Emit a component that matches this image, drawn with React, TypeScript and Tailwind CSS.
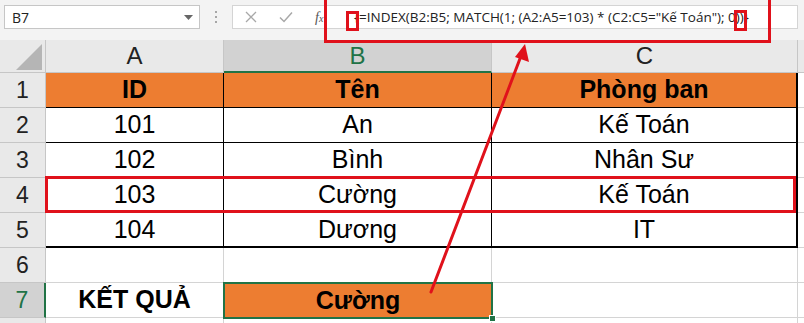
import React from 'react';

const FONT = { fontFamily: '"Liberation Sans", Arial, sans-serif' };

type CellProps = {
    w: string;
    children?: React.ReactNode;
    className?: string;
};

// one spreadsheet cell, width and borders come from className
const Cell: React.FC<CellProps> = ({ w, children, className = '' }) => (
    <div className={`${w} shrink-0 h-full flex items-center justify-center text-[25px] text-black ${className}`}>
        {children}
    </div>
);

const RowHead: React.FC<{ n?: number; active?: boolean }> = ({ n, active }) => (
    <div
        className={
            active
                ? 'w-[46px] shrink-0 h-full flex items-center justify-center text-[23px] text-[#217346] bg-[#d2d2d2] border-b border-b-[#c6c6c6] border-r-2 border-r-[#217346]'
                : 'w-[46px] shrink-0 h-full flex items-center justify-center text-[23px] text-[#222] bg-[#e9e9e9] border-b border-b-[#c6c6c6] border-r border-r-[#c6c6c6]'
        }
    >
        {n}
    </div>
);

const data = [
    ['101', 'An', 'Kế Toán'],
    ['102', 'Bình', 'Nhân Sư'],
    ['103', 'Cường', 'Kế Toán'],
    ['104', 'Dương', 'IT'],
];

const FormulaBar = () => (
    <div className="h-[40px] bg-[#f3f3f3] relative flex items-start pt-[5px] pl-[4px]">
        {/* name box */}
        <div className="w-[196px] h-[24px] bg-white border border-[#c6c6c6] flex items-center justify-between pl-[7px] pr-[6px] text-[14px] text-[#222]" style={{ fontFamily: '"Open Sans", sans-serif' }}>
            <span>B7</span>
            <svg width="9" height="5" viewBox="0 0 9 5"><path d="M0 0h9L4.5 5z" fill="#666" /></svg>
        </div>
        <div className="w-[32px] h-[24px] flex flex-col items-center justify-center gap-[3px]">
            <span className="w-[2px] h-[2px] bg-[#a6a6a6]" />
            <span className="w-[2px] h-[2px] bg-[#a6a6a6]" />
            <span className="w-[2px] h-[2px] bg-[#a6a6a6]" />
        </div>
        {/* formula input */}
        <div className="flex-1 mr-[6px] h-[24px] bg-white border border-[#d4d4d4] flex items-center">
            <div className="w-[112px] shrink-0 h-full flex items-center pl-[12px] gap-[22px]">
                <svg width="12" height="12" viewBox="0 0 12 12"><path d="M1 1l10 10M11 1L1 11" stroke="#a8a8a8" strokeWidth="1.3" /></svg>
                <svg width="14" height="12" viewBox="0 0 14 12"><path d="M1 6.5l4 4L13 1.5" stroke="#a8a8a8" strokeWidth="1.5" fill="none" /></svg>
                <span className="text-[14px] italic text-[#555]" style={{ fontFamily: '"Liberation Serif", serif' }}>f<span className="text-[10px]">x</span></span>
            </div>
            <div className="text-[13.5px] text-[#222] whitespace-nowrap pl-[9px]" style={{ fontFamily: '"Open Sans", sans-serif' }}>
                {'{=INDEX(B2:B5; MATCH(1; (A2:A5=103) * (C2:C5="Kế Toán"); 0))}'}
            </div>
        </div>
    </div>
);

export default function App() {
    return (
        <div className="w-[804px] h-[323px] overflow-hidden bg-white relative" style={FONT}>
            <FormulaBar />

            {/* column headers */}
            <div className="flex h-[33px]">
                <div className="w-[46px] shrink-0 h-full bg-[#e9e9e9] border-r border-b border-[#c6c6c6] flex items-end justify-end pr-[3px] pb-[2px]">
                    <svg width="26" height="26" viewBox="0 0 26 26"><path d="M26 0V26H0z" fill="#b5b5b5" /></svg>
                </div>
                <div className="w-[178px] shrink-0 h-full bg-[#e9e9e9] border-r border-b border-[#c6c6c6] flex items-center justify-center text-[24px] text-[#222]">A</div>
                <div className="w-[268px] shrink-0 h-full bg-[#d2d2d2] border-r border-r-[#c6c6c6] border-b-2 border-b-[#217346] flex items-center justify-center text-[24px] text-[#217346]">B</div>
                <div className="w-[306px] shrink-0 h-full bg-[#e9e9e9] border-r border-b border-[#c6c6c6] flex items-center justify-center text-[24px] text-[#222]">C</div>
                <div className="flex-1 h-full bg-[#e9e9e9] border-b border-[#c6c6c6]" />
            </div>

            {/* row 1 - table header */}
            <div className="flex h-[35px]">
                <RowHead n={1} />
                <Cell w="w-[178px]" className="bg-[#ed7d31] font-bold border-r border-b border-black">ID</Cell>
                <Cell w="w-[268px]" className="bg-[#ed7d31] font-bold border-r border-b border-black">Tên</Cell>
                <Cell w="w-[306px]" className="bg-[#ed7d31] font-bold border-r-2 border-b border-black">Phòng ban</Cell>
                <div className="flex-1 h-full border-b border-[#d4d4d4]" />
            </div>

            {data.map((row, i) => (
                <div key={i} className="flex h-[35px]">
                    <RowHead n={i + 2} />
                    <Cell w="w-[178px]" className={i === 3 ? 'border-r border-b-2 border-black' : 'border-r border-b border-black'}>{row[0]}</Cell>
                    <Cell w="w-[268px]" className={i === 3 ? 'border-r border-b-2 border-black' : 'border-r border-b border-black'}>{row[1]}</Cell>
                    <Cell w="w-[306px]" className={i === 3 ? 'border-r-2 border-b-2 border-black' : 'border-r-2 border-b border-black'}>{row[2]}</Cell>
                    <div className="flex-1 h-full border-b border-[#d4d4d4]" />
                </div>
            ))}

            {/* row 6 - empty */}
            <div className="flex h-[35px]">
                <RowHead n={6} />
                <Cell w="w-[178px]" className="border-r border-b border-[#d4d4d4]" />
                <Cell w="w-[268px]" className="border-r border-b border-[#d4d4d4]" />
                <Cell w="w-[306px]" className="border-r border-b border-[#d4d4d4]" />
                <div className="flex-1 h-full border-b border-[#d4d4d4]" />
            </div>

            {/* row 7 - result */}
            <div className="flex h-[35px]">
                <RowHead n={7} active />
                <Cell w="w-[178px]" className="font-bold border-r border-b border-[#d4d4d4]">KẾT QUẢ</Cell>
                <div className="w-[268px] shrink-0 h-full relative">
                    <div className="absolute -left-px -top-px w-[270px] h-[37px] border-2 border-[#217346] bg-[#ed7d31] flex items-center justify-center text-[25px] font-bold text-black">
                        Cường
                    </div>
                    <div className="absolute -right-[4px] -bottom-[4px] w-[7px] h-[7px] bg-[#217346] border border-white" />
                </div>
                <Cell w="w-[306px]" className="border-r border-b border-[#d4d4d4]" />
                <div className="flex-1 h-full border-b border-[#d4d4d4]" />
            </div>

            {/* row 8, only its top edge shows */}
            <div className="flex h-[10px]">
                <RowHead />
                <Cell w="w-[178px]" className="border-r border-[#d4d4d4]" />
                <Cell w="w-[268px]" className="border-r border-[#d4d4d4]" />
                <Cell w="w-[306px]" className="border-r border-[#d4d4d4]" />
            </div>

            {/* red annotations */}
            <div className="absolute left-[324px] top-[-3px] w-[447px] h-[46px] border-[3px] border-[#e0111b] pointer-events-none" />
            <div className="absolute left-[346px] top-[11px] w-[13px] h-[20px] border-[3px] border-[#e0111b] pointer-events-none" />
            <div className="absolute left-[734px] top-[10px] w-[13px] h-[21px] border-[3px] border-[#e0111b] pointer-events-none" />
            <div className="absolute left-[45px] top-[176px] w-[751px] h-[37px] border-[3px] border-[#e0111b] pointer-events-none" />
            <svg className="absolute left-0 top-0 pointer-events-none" width="804" height="323">
                <line x1="431" y1="292" x2="521" y2="56" stroke="#e0111b" strokeWidth="3" strokeLinecap="round" />
                <path d="M525 44L529 62L515 57z" fill="#e0111b" />
            </svg>
        </div>
    );
}
